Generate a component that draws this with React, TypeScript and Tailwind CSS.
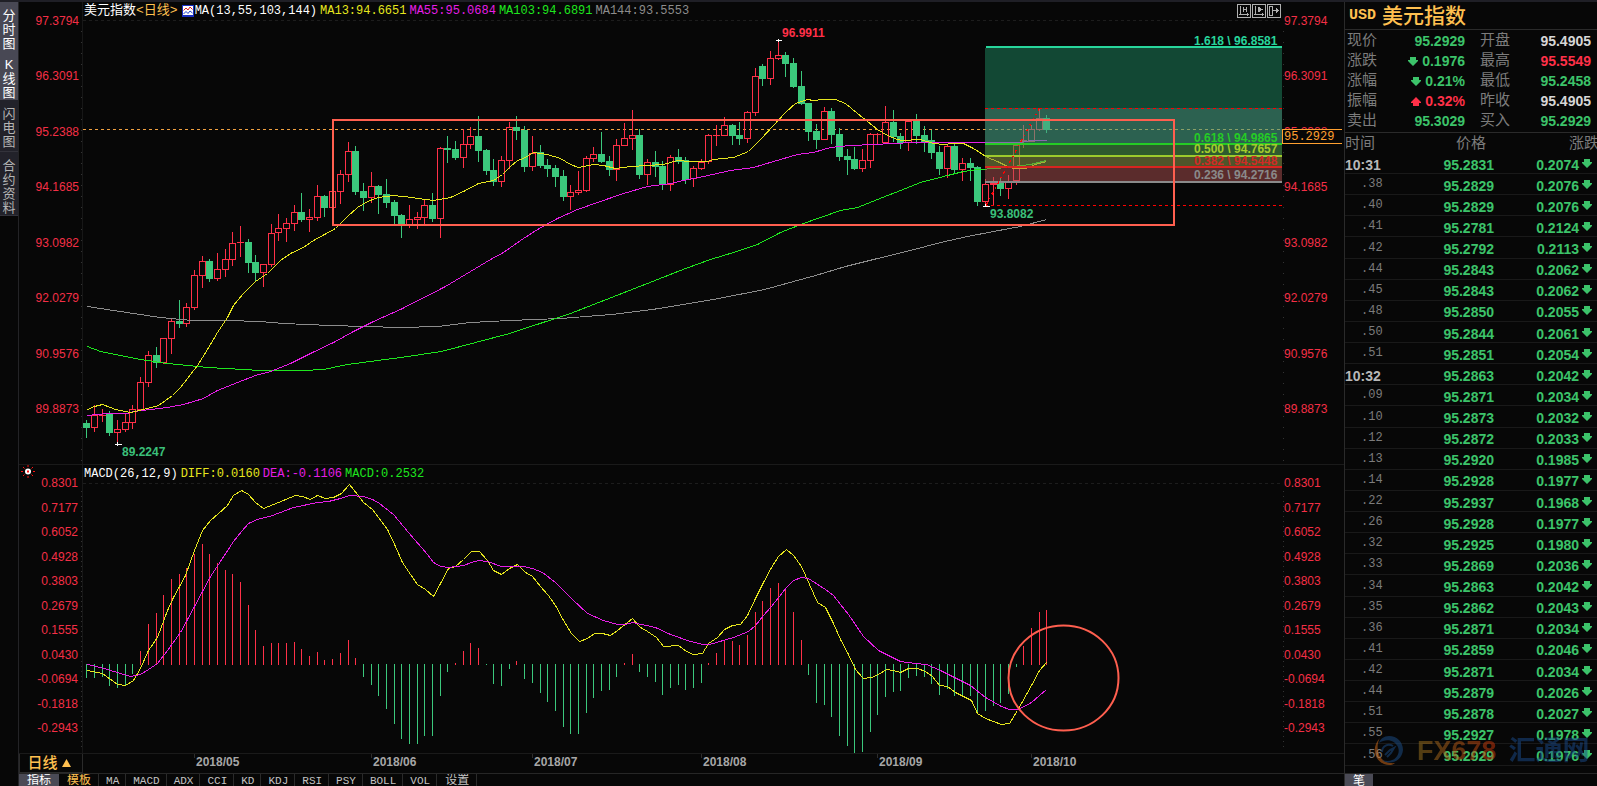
import React from "react";

type Candle = [kind: "R" | "G", high: number, top: number, bottom: number, low: number];
type Point = [number, number];

const X0 = 86.4;
const STEP = 7.68;
const xAt = (i: number) => Math.round(X0 + STEP * i);

const PLOT_LEFT = 83;
const PLOT_WIDTH = 1199;
const PRICE_TOP = 2;
const PRICE_HEIGHT = 462;
const MACD_TOP = 465;
const MACD_HEIGHT = 288;
const ZERO = 664;

const RED = "#ff3048";
const GREEN = "#3bc87c";

const candles: Candle[] = [
  ["G", 420, 423, 428, 437], ["R", 405, 415, 428, 432], ["R", 409, 415, 416, 421], ["G", 411, 414, 433, 435],
  ["R", 420, 429, 433, 442], ["R", 414, 422, 430, 432], ["R", 405, 409, 423, 429], ["R", 377, 382, 410, 410],
  ["R", 351, 355, 383, 387], ["G", 347, 355, 363, 367], ["R", 338, 338, 363, 364], ["R", 319, 321, 339, 354],
  ["G", 300, 321, 324, 327], ["R", 303, 307, 324, 327], ["R", 270, 275, 308, 310], ["R", 256, 261, 276, 288],
  ["G", 259, 261, 279, 281], ["R", 253, 269, 279, 281], ["R", 249, 259, 270, 277], ["R", 232, 243, 260, 266],
  ["R", 226, 242, 243, 256], ["G", 239, 242, 263, 272], ["G", 255, 262, 273, 281], ["R", 264, 264, 273, 287],
  ["R", 224, 233, 265, 267], ["R", 214, 228, 233, 241], ["R", 218, 223, 229, 242], ["R", 205, 212, 224, 231],
  ["G", 193, 212, 220, 221], ["R", 209, 217, 220, 232], ["R", 185, 196, 218, 221], ["G", 195, 196, 208, 216],
  ["R", 191, 191, 208, 208], ["R", 170, 174, 192, 204], ["R", 142, 151, 175, 182], ["G", 146, 151, 192, 194],
  ["G", 183, 191, 198, 210], ["R", 172, 186, 198, 203], ["G", 185, 186, 195, 213], ["G", 179, 194, 203, 207],
  ["G", 200, 202, 216, 224], ["G", 214, 215, 225, 237], ["R", 205, 219, 225, 228], ["R", 212, 217, 220, 229],
  ["R", 200, 205, 218, 224], ["G", 193, 205, 219, 221], ["R", 147, 148, 219, 238], ["G", 136, 148, 150, 162],
  ["G", 141, 149, 158, 159], ["R", 129, 144, 158, 168], ["R", 127, 136, 145, 149], ["G", 116, 136, 151, 161],
  ["G", 149, 150, 171, 174], ["G", 159, 170, 182, 185], ["R", 156, 160, 182, 187], ["R", 122, 127, 161, 169],
  ["G", 116, 127, 131, 139], ["G", 126, 130, 167, 171], ["R", 136, 153, 167, 171], ["G", 145, 152, 166, 167],
  ["G", 159, 165, 169, 176], ["G", 165, 168, 177, 186], ["G", 170, 176, 197, 200], ["R", 185, 192, 197, 210],
  ["R", 171, 190, 193, 195], ["R", 156, 158, 191, 192], ["R", 147, 154, 159, 162], ["G", 132, 154, 162, 162],
  ["G", 156, 161, 170, 175], ["R", 139, 145, 170, 181], ["R", 123, 138, 146, 146], ["R", 110, 135, 139, 150],
  ["G", 129, 135, 175, 178], ["R", 159, 162, 175, 185], ["G", 151, 162, 167, 176], ["G", 161, 166, 185, 189],
  ["R", 155, 157, 185, 191], ["G", 149, 157, 162, 163], ["G", 157, 160, 180, 183], ["R", 166, 168, 179, 187],
  ["R", 159, 162, 169, 170], ["R", 134, 135, 162, 164], ["R", 125, 135, 136, 145], ["R", 117, 125, 136, 136],
  ["G", 124, 125, 136, 144], ["G", 122, 135, 139, 144], ["R", 111, 112, 139, 143], ["R", 68, 76, 113, 116],
  ["G", 64, 66, 79, 85], ["R", 51, 58, 79, 85], ["R", 41, 55, 59, 60], ["G", 52, 55, 64, 76],
  ["G", 58, 63, 87, 87], ["G", 71, 86, 104, 104], ["G", 103, 103, 132, 140], ["G", 124, 131, 140, 148],
  ["R", 107, 111, 140, 140], ["G", 108, 111, 135, 143], ["G", 128, 134, 157, 160], ["G", 149, 156, 160, 174],
  ["G", 147, 159, 169, 169], ["R", 149, 160, 169, 172], ["R", 133, 134, 161, 168], ["R", 133, 134, 135, 143],
  ["R", 106, 122, 143, 143], ["G", 110, 122, 137, 141], ["G", 133, 136, 143, 148], ["R", 121, 121, 143, 151],
  ["G", 114, 120, 136, 143], ["G", 126, 135, 142, 151], ["G", 130, 140, 153, 158], ["G", 146, 152, 169, 174],
  ["R", 144, 146, 169, 178], ["G", 144, 146, 170, 172], ["R", 158, 163, 170, 181], ["G", 158, 163, 168, 180],
  ["G", 166, 167, 202, 205], ["R", 179, 184, 202, 205], ["R", 177, 183, 185, 205], ["G", 177, 183, 189, 195],
  ["R", 175, 182, 189, 199], ["R", 145, 145, 181, 185], ["R", 125, 140, 142, 148], ["R", 125, 129, 142, 142],
  ["R", 106, 118, 130, 131], ["G", 115, 118, 130, 132],
];

const ma13: Point[] = [
  [87, 409], [94, 406], [102, 404], [115, 409], [130, 412], [143, 409], [158, 405], [172, 395], [180, 387], [187, 378],
  [197, 365], [207, 349], [217, 332], [227, 317], [233, 305], [243, 293], [255, 281], [267, 273], [280, 260], [290, 253],
  [303, 247], [313, 240], [335, 228], [347, 216], [357, 207], [367, 201], [378, 197], [393, 195], [412, 197], [417, 198],
  [433, 200], [450, 197], [463, 191], [478, 183], [493, 180], [502, 174], [510, 166], [517, 160], [523, 158], [533, 152],
  [547, 154], [560, 158], [570, 164], [578, 167], [593, 164], [603, 165], [615, 168], [630, 166], [663, 164], [677, 160],
  [690, 161], [707, 161], [713, 159], [733, 157], [748, 151], [760, 139], [773, 125], [785, 112], [795, 103], [807, 99],
  [813, 100], [822, 99], [835, 99], [845, 103], [857, 113], [867, 121], [877, 129], [887, 135], [897, 139], [902, 140],
  [920, 139], [933, 143], [943, 144], [953, 143], [963, 143], [973, 148], [987, 157], [997, 161], [1007, 166], [1013, 168],
  [1025, 168], [1035, 164], [1046, 161],
];
const ma55: Point[] = [
  [87, 415], [107, 413], [127, 413], [133, 411], [150, 409], [167, 407], [183, 404], [203, 398], [217, 390], [237, 382],
  [255, 375], [270, 371], [290, 363], [310, 353], [333, 342], [353, 331], [373, 321], [400, 309], [445, 286], [490, 259],
  [503, 252], [520, 240], [537, 229], [557, 218], [577, 209], [597, 202], [623, 193], [647, 186], [670, 183], [683, 180],
  [703, 176], [730, 170], [753, 167], [773, 161], [797, 154], [813, 152], [830, 147], [850, 145], [873, 144], [913, 142],
  [967, 142], [1020, 142], [1030, 140], [1046, 140],
];
const ma103: Point[] = [
  [87, 346], [100, 351], [120, 355], [140, 359], [167, 363], [187, 365], [207, 367], [243, 369], [260, 370], [303, 370],
  [323, 369], [347, 364], [377, 360], [400, 357], [441, 351], [475, 342], [509, 333], [570, 313], [611, 297], [652, 281],
  [685, 268], [710, 259], [733, 252], [757, 244], [780, 232], [803, 223], [820, 217], [840, 210], [857, 207], [877, 199],
  [900, 190], [920, 182], [943, 176], [963, 171], [977, 169], [997, 168], [1012, 166], [1030, 164], [1046, 160],
];
const ma144: Point[] = [
  [87, 306], [113, 310], [133, 313], [160, 317], [180, 319], [193, 320], [227, 320], [260, 321], [283, 323], [330, 325],
  [400, 327], [438, 326], [470, 322], [509, 320], [560, 318], [611, 314], [652, 309], [713, 299], [764, 289], [815, 275],
  [845, 266], [873, 259], [910, 250], [940, 242], [967, 236], [993, 231], [1020, 226], [1046, 219],
];

const macdEnds: number[] = [
  678, 678, 677, 686, 688, 685, 674, 651, 624, 613, 595, 579, 574, 568, 554, 544, 554, 563, 570, 574, 582, 605, 630, 646,
  643, 643, 643, 642, 649, 656, 652, 660, 659, 653, 640, 658, 677, 685, 696, 709, 724, 739, 744, 744, 736, 736, 696, 672,
  663, 651, 643, 648, 665, 684, 686, 669, 661, 679, 683, 693, 702, 711, 727, 734, 734, 713, 698, 691, 690, 677, 663, 654,
  672, 677, 682, 695, 688, 685, 690, 688, 683, 663, 653, 641, 641, 645, 635, 612, 601, 588, 583, 590, 612, 640, 675, 703,
  705, 717, 736, 746, 753, 752, 732, 715, 697, 692, 691, 678, 676, 677, 684, 695, 689, 696, 697, 696, 712, 711, 706, 703,
  694, 667, 646, 628, 612, 610,
];
const diff: Point[] = [
  [87, 670], [102, 673], [117, 684], [125, 685], [133, 680], [140, 668], [148, 650], [157, 637], [167, 610], [173, 597],
  [185, 575], [194, 550], [202, 530], [210, 520], [218, 513], [227, 505], [233, 495], [241, 490], [248, 494], [255, 502],
  [263, 508], [278, 502], [295, 495], [302, 496], [310, 499], [317, 495], [325, 498], [333, 497], [341, 493], [349, 484],
  [357, 494], [363, 502], [372, 509], [387, 529], [395, 546], [402, 562], [410, 574], [417, 584], [425, 589], [433, 596],
  [440, 583], [448, 568], [455, 566], [463, 559], [471, 551], [479, 551], [487, 560], [493, 570], [501, 574], [509, 568],
  [517, 564], [525, 572], [532, 576], [540, 586], [548, 595], [555, 605], [563, 620], [571, 633], [579, 641], [587, 638],
  [594, 633], [602, 633], [610, 635], [617, 630], [632, 618], [640, 627], [647, 631], [656, 637], [663, 646], [678, 645],
  [686, 651], [693, 654], [702, 653], [708, 643], [717, 637], [724, 629], [732, 625], [740, 624], [747, 615], [755, 598],
  [763, 582], [771, 567], [778, 556], [786, 549], [793, 555], [801, 566], [809, 584], [817, 602], [825, 607], [833, 623],
  [840, 639], [848, 654], [855, 669], [863, 678], [871, 677], [878, 674], [886, 669], [893, 670], [900, 672], [908, 668],
  [917, 668], [925, 671], [932, 676], [939, 685], [947, 686], [955, 692], [971, 700], [977, 713], [985, 718], [1001, 724],
  [1009, 723], [1017, 710], [1031, 685], [1039, 670], [1046, 662],
];
const dea: Point[] = [
  [87, 664], [100, 667], [117, 672], [130, 676], [140, 674], [148, 669], [157, 663], [167, 650], [180, 632], [194, 606],
  [202, 591], [210, 576], [218, 564], [233, 541], [241, 531], [248, 523], [257, 519], [272, 515], [293, 507], [317, 502],
  [328, 501], [340, 498], [349, 495], [363, 496], [372, 499], [379, 503], [393, 514], [408, 532], [427, 554], [433, 562],
  [440, 566], [448, 567], [463, 565], [471, 562], [478, 560], [487, 561], [501, 566], [523, 566], [532, 568], [542, 572],
  [555, 582], [571, 598], [587, 613], [603, 620], [617, 624], [625, 624], [632, 622], [655, 627], [670, 634], [687, 640],
  [702, 644], [709, 644], [733, 637], [748, 631], [755, 625], [763, 615], [771, 606], [786, 587], [793, 580], [801, 577],
  [808, 578], [825, 589], [833, 595], [840, 604], [848, 614], [863, 636], [878, 650], [900, 661], [915, 663], [926, 664],
  [940, 670], [970, 685], [985, 697], [1001, 706], [1009, 709], [1018, 709], [1031, 702], [1046, 689],
];

const priceScale = ["97.3794", "96.3091", "95.2388", "94.1685", "93.0982", "92.0279", "90.9576", "89.8873"];
const macdScale = ["0.8301", "0.7177", "0.6052", "0.4928", "0.3803", "0.2679", "0.1555", "0.0430", "-0.0694", "-0.1818", "-0.2943"];
const months: [string, number][] = [
  ["2018/05", 194], ["2018/06", 371], ["2018/07", 532], ["2018/08", 701], ["2018/09", 877], ["2018/10", 1031],
];

const ticks: [string, string, string][] = [
  ["10:31", "95.2831", "0.2074"], [".38", "95.2829", "0.2076"], [".40", "95.2829", "0.2076"], [".41", "95.2781", "0.2124"],
  [".42", "95.2792", "0.2113"], [".44", "95.2843", "0.2062"], [".45", "95.2843", "0.2062"], [".48", "95.2850", "0.2055"],
  [".50", "95.2844", "0.2061"], [".51", "95.2851", "0.2054"], ["10:32", "95.2863", "0.2042"], [".09", "95.2871", "0.2034"],
  [".10", "95.2873", "0.2032"], [".12", "95.2872", "0.2033"], [".13", "95.2920", "0.1985"], [".14", "95.2928", "0.1977"],
  [".22", "95.2937", "0.1968"], [".26", "95.2928", "0.1977"], [".32", "95.2925", "0.1980"], [".33", "95.2869", "0.2036"],
  [".34", "95.2863", "0.2042"], [".35", "95.2862", "0.2043"], [".36", "95.2871", "0.2034"], [".41", "95.2859", "0.2046"],
  [".42", "95.2871", "0.2034"], [".44", "95.2879", "0.2026"], [".51", "95.2878", "0.2027"], [".55", "95.2927", "0.1978"],
  [".56", "95.2929", "0.1976"],
];

const CJK = "font-['Liberation_Sans','Noto_Sans_CJK_SC',sans-serif]";
const MONO = "font-['Liberation_Mono','Noto_Sans_CJK_SC',monospace]";

const toPoints = (pts: Point[]) => pts.map(([x, y]) => `${x + 0.5},${y + 0.5}`).join(" ");

function Line({ pts, color }: { pts: Point[]; color: string }) {
  return <polyline points={toPoints(pts)} fill="none" stroke={color} strokeWidth="1" />;
}

function CandleMark({ i, c }: { i: number; c: Candle }) {
  const x = xAt(i);
  const [kind, high, top, bottom, low] = c;
  if (kind === "G") {
    return (
      <g fill={GREEN}>
        <rect x={x} y={high} width="1" height={low - high + 1} />
        <rect x={x - 3} y={top} width="7" height={Math.max(bottom - top, 1)} />
      </g>
    );
  }
  if (bottom - top <= 1) {
    return (
      <g fill={RED}>
        <rect x={x} y={high} width="1" height={low - high + 1} />
        <rect x={x - 3} y={top} width="7" height="1" />
      </g>
    );
  }
  return (
    <g>
      <rect x={x} y={high} width="1" height={top - high} fill={RED} />
      <rect x={x} y={bottom} width="1" height={Math.max(low - bottom, 0)} fill={RED} />
      <rect x={x - 2.5} y={top + 0.5} width="6" height={bottom - top - 1} fill="none" stroke={RED} />
    </g>
  );
}

function AxisTicks({ x, from, to, step }: { x: number; from: number; to: number; step: number }) {
  return <line x1={x} x2={x} y1={from} y2={to} stroke="#333" strokeWidth="1" strokeDasharray={`1 ${step - 1}`} />;
}

function Note({ x, y, className, children }: { x: number; y: number; className: string; children: string }) {
  return (
    <span
      className={`absolute -translate-y-1/2 text-[12px] leading-4 font-bold whitespace-pre ${className}`}
      style={{
        left: `${((x - PLOT_LEFT) / PLOT_WIDTH) * 100}%`,
        top: `${((y - PRICE_TOP) / PRICE_HEIGHT) * 100}%`,
      }}
    >
      {children}
    </span>
  );
}

const fibLabels: [string, number, string][] = [
  ["1.618 \\ 96.8581", 41, "text-[#27d59b]"],
  ["0.618 \\ 94.9865", 138, "text-[#25cc25]"],
  ["0.500 \\ 94.7657", 149, "text-[#a3cd2c]"],
  ["0.382 \\ 94.5448", 161, "text-[#d02b26]"],
  ["0.236 \\ 94.2716", 175, "text-[#8a8a8a]"],
];

function PriceChart() {
  return (
    <svg
      className="absolute inset-0 h-full w-full"
      viewBox={`${PLOT_LEFT} ${PRICE_TOP} ${PLOT_WIDTH} ${PRICE_HEIGHT}`}
      preserveAspectRatio="none"
      shapeRendering="crispEdges"
      aria-hidden="true"
    >
      <line x1="83" x2="1282" y1="20.5" y2="20.5" stroke="#1d1d1d" strokeDasharray="3 3" />
      <line x1="83" x2="1282" y1="129.5" y2="129.5" stroke="#f0a040" strokeDasharray="3 3" />
      {candles.map((c, i) => (
        <CandleMark key={i} i={i} c={c} />
      ))}
      <Line pts={ma144} color="#8c8c8c" />
      <Line pts={ma103} color="#1ee61e" />
      <Line pts={ma55} color="#e61ee6" />
      <Line pts={ma13} color="#e6e61e" />
      <g>
        <rect x="985" y="48" width="297" height="60" fill="#124834" />
        <rect x="985" y="108" width="297" height="35" fill="#469e82" fillOpacity="0.6" />
        <rect x="985" y="145" width="297" height="10" fill="#49924a" fillOpacity="0.6" />
        <rect x="985" y="157" width="297" height="9" fill="#808a42" fillOpacity="0.6" />
        <rect x="985" y="168" width="297" height="13" fill="#b05252" fillOpacity="0.5" />
        <rect x="986" y="46" width="296" height="2" fill="#27d59b" />
        <rect x="985" y="143" width="297" height="2" fill="#25cc25" />
        <rect x="985" y="155" width="297" height="2" fill="#9dcb2c" />
        <rect x="985" y="166" width="297" height="2" fill="#d8241f" />
        <rect x="985" y="181" width="297" height="2" fill="#8a8a8a" />
        <line x1="985" x2="1282" y1="108.5" y2="108.5" stroke="#ff0000" strokeDasharray="3 3" />
        <line x1="985" x2="1282" y1="205.5" y2="205.5" stroke="#ff0000" strokeDasharray="3 3" />
        <line x1="986" x2="1040" y1="205" y2="107" stroke="#ff0000" strokeWidth="1.5" strokeDasharray="3 4 1 4" />
      </g>
      <g fill="#ffffff">
        <rect x="776" y="40" width="6" height="1" />
        <rect x="778" y="39" width="1" height="3" />
        <rect x="115" y="444" width="7" height="1" />
        <rect x="117" y="442" width="1" height="4" />
        <rect x="983" y="206" width="7" height="1" />
        <rect x="985" y="204" width="1" height="2" />
      </g>
      <rect x="333" y="120" width="841" height="105" fill="none" stroke="#ff5f4f" strokeWidth="2" />
    </svg>
  );
}

function MacdChart() {
  return (
    <svg
      className="absolute inset-0 h-full w-full"
      viewBox={`${PLOT_LEFT} ${MACD_TOP} ${PLOT_WIDTH} ${MACD_HEIGHT}`}
      preserveAspectRatio="none"
      shapeRendering="crispEdges"
      aria-hidden="true"
    >
      <line x1="83" x2="1282" y1="483.5" y2="483.5" stroke="#1d1d1d" strokeDasharray="3 3" />
      {macdEnds.map((end, i) =>
        end > ZERO ? (
          <rect key={i} x={xAt(i)} y={ZERO} width="1" height={end - ZERO} fill={GREEN} />
        ) : (
          <rect key={i} x={xAt(i)} y={end} width="1" height={ZERO - end + 1} fill={RED} />
        ),
      )}
      <Line pts={diff} color="#e6e61e" />
      <Line pts={dea} color="#e61ee6" />
      <ellipse
        cx="1063.5" cy="678" rx="55" ry="52.5" fill="none" stroke="#ff5f4f" strokeWidth="2" shapeRendering="auto"
      />
    </svg>
  );
}

function Scale({ labels, className }: { labels: string[]; className: string }) {
  return (
    <div className={`flex flex-col justify-between text-[12px] leading-4 text-[#f42f46] ${className}`}>
      {labels.map((l) => (
        <span key={l}>{l}</span>
      ))}
    </div>
  );
}

function Gutter({ side, from, to, viewBox, step }: { side: "left" | "right"; from: number; to: number; viewBox: string; step: number }) {
  return (
    <svg
      className={side === "left" ? "absolute top-0 right-0 h-full w-[2px]" : "absolute top-0 left-0 h-full w-[2px]"}
      viewBox={viewBox}
      preserveAspectRatio="none"
      shapeRendering="crispEdges"
      aria-hidden="true"
    >
      {side === "left" && <line x1="1.5" x2="1.5" y1={from - 60} y2={to + 60} stroke="#171717" />}
      <AxisTicks x={side === "left" ? 0.5 : 1.5} from={from} to={to} step={step} />
    </svg>
  );
}

function Arrow({ up = false }: { up?: boolean }) {
  return (
    <svg className="inline-block h-[9px] w-[10px] shrink-0" viewBox="0 0 10 9" fill="currentColor" aria-hidden="true">
      {up ? <path d="M5 0 10 5V6H8V9H2V6H0V5Z" /> : <path d="M2 0H8V3H10V4L5 9 0 4V3H2Z" />}
    </svg>
  );
}

function SideTab({ text, active, className }: { text: string; active?: boolean; className?: string }) {
  return (
    <button
      type="button"
      className={`flex w-full flex-col items-center pt-[7px] text-[13px] leading-[14px] ${
        active ? "bg-[#484854] text-white" : "border-b border-[#33333b] bg-[#22222a] text-[#b4b4b4]"
      } ${className ?? ""}`}
    >
      {[...text].map((ch, i) => (
        <span key={i}>{ch}</span>
      ))}
    </button>
  );
}

function ToolButton({ label, children }: { label: string; children: React.ReactNode }) {
  return (
    <button type="button" aria-label={label} className="h-[14px] w-[14px] border border-[#b0b0b0] text-[#b0b0b0]">
      <svg className="h-3 w-3" viewBox="0 0 12 12" fill="none" stroke="currentColor" shapeRendering="crispEdges" aria-hidden="true">
        {children}
      </svg>
    </button>
  );
}

function ChartArea() {
  return (
    <main className="flex min-w-0 flex-1 flex-col border-l border-[#232326]">
      <section className="flex min-h-0 flex-[462_1_0%]">
        <div className="relative flex w-16 shrink-0 justify-end">
          <Scale labels={priceScale} className="pt-[11px] pr-1 pb-[47px] text-right" />
          <Gutter side="left" from={31} to={462} viewBox="0 2 2 462" step={11} />
        </div>
        <div className="relative min-w-0 flex-1">
          <PriceChart />
          <Note x={782} y={33} className="text-[#ff3048]">96.9911</Note>
          <Note x={122} y={452} className="text-[#3bc07a]">89.2247</Note>
          <Note x={990} y={214} className="text-[#3bc07a]">93.8082</Note>
          {fibLabels.map(([t, y, cls]) => (
            <Note key={t} x={1194} y={y} className={cls}>{t}</Note>
          ))}
          <div className={`relative flex h-[18px] items-center gap-[3px] pl-px text-[12px] leading-4 whitespace-nowrap ${MONO}`}>
            <h1 className="mr-1 flex text-[13px] font-normal text-white">
              美元指数<span className="text-[#ffc050]">&lt;日线&gt;</span>
            </h1>
            <svg className="-mr-[2px] -ml-[3px] h-3 w-3" viewBox="0 0 12 12" aria-hidden="true">
              <rect width="12" height="12" fill="#1a2fc0" />
              <rect x="1" y="1" width="10" height="9" fill="#ffffff" />
              <path d="M1.5 5.5 4 3 6 5 8 2 10.5 4.5" fill="none" stroke="#e02020" />
              <path d="M1.5 9 4 6.5 6 8.5 8 6 10.5 8" fill="none" stroke="#2040d0" />
            </svg>
            <span className="text-white">MA(13,55,103,144)</span>
            <span className="text-[#e6e61e]">MA13:94.6651</span>
            <span className="text-[#e61ee6]">MA55:95.0684</span>
            <span className="text-[#1ee61e]">MA103:94.6891</span>
            <span className="text-[#8c8c8c]">MA144:93.5553</span>
            <div className="mr-px ml-auto flex gap-px">
              <ToolButton label="压缩">
                <path d="M2.5 1V10M1 9.5H11M9.5 8V11M5.5 2V7M8.5 2V7M6 4.5H8" />
              </ToolButton>
              <ToolButton label="播放">
                <path d="M2.5 1V10M1 9.5H11M9.5 8V11" />
                <path d="M5 1.5V7.5L9.5 4.5Z" fill="currentColor" stroke="none" />
              </ToolButton>
              <ToolButton label="平移">
                <path d="M1.5 1.5H4.5V10.5H1.5ZM5 5.5H11M8.5 3V8M9.5 4V7" />
              </ToolButton>
            </div>
          </div>
        </div>
        <div className="relative w-[62px] shrink-0">
          <Scale labels={priceScale} className="h-full pt-[11px] pb-[47px] pl-[2px]" />
          <Gutter side="right" from={31} to={462} viewBox="0 2 2 462" step={11} />
          <div
            className={`absolute right-[2px] left-0 h-[15px] border border-r-0 border-[#ffa030] bg-[#070707] pt-px pl-px text-[12px] leading-[13px] text-[#ffa030] ${MONO}`}
            style={{ top: `${((129 - PRICE_TOP) / PRICE_HEIGHT) * 100}%` }}
          >
            95.2929
          </div>
        </div>
      </section>

      <section className="flex min-h-0 flex-[288_1_0%] border-t border-[#1a1a1a]">
        <div className="relative flex w-16 shrink-0 justify-between">
          <svg className="h-[14px] w-[18px]" viewBox="0 0 18 14" aria-hidden="true">
            <path
              d="M9 0V2M9 11V13M2 6.5H4M14 6.5H16M4 2 5.5 3.5M14 2 12.5 3.5M4 11 5.5 9.5M14 11 12.5 9.5"
              stroke="#ff1010"
            />
            <circle cx="9" cy="6.5" r="3" fill="#ffffff" />
            <rect x="8" y="5.5" width="2" height="2" fill="#ff1010" />
          </svg>
          <Scale labels={macdScale} className="pt-[10px] pr-[5px] pb-[17px] text-right" />
          <Gutter side="left" from={491} to={750} viewBox="0 465 2 288" step={5} />
        </div>
        <div className="relative min-w-0 flex-1">
          <MacdChart />
          <div className={`relative flex h-[17px] items-center gap-[3px] pl-px text-[12px] leading-4 whitespace-nowrap ${MONO}`}>
            <span className="text-white">MACD(26,12,9)</span>
            <span className="text-[#e6e61e]">DIFF:0.0160</span>
            <span className="text-[#e61ee6]">DEA:-0.1106</span>
            <span className="text-[#1ee61e]">MACD:0.2532</span>
          </div>
        </div>
        <div className="relative w-[62px] shrink-0">
          <Scale labels={macdScale} className="h-full pt-[10px] pb-[17px] pl-[2px]" />
          <Gutter side="right" from={491} to={750} viewBox="0 465 2 288" step={5} />
        </div>
      </section>

      <div className="flex h-5 shrink-0 border-t border-[#1a1a1a]">
        <button
          type="button"
          className="flex w-16 shrink-0 items-center justify-center gap-1 border border-t-0 border-[#2a2a2a] pr-1 text-[15px] leading-4 font-medium text-[#ffc050]"
        >
          日线
          <svg className="h-2 w-[9px]" viewBox="0 0 9 8" fill="currentColor" aria-hidden="true">
            <path d="M4.5 0 9 8H0Z" />
          </svg>
        </button>
        <div className="relative flex-1">
          {months.map(([m, x]) => (
            <span
              key={m}
              className="absolute top-0 h-4 text-[12px] leading-4 font-bold text-[#a6a6a6]"
              style={{ left: `${((x - PLOT_LEFT) / PLOT_WIDTH) * 100}%` }}
            >
              <span className="flex gap-[1px]">
                <i className="block h-1 w-px bg-[#2c2c2c]" />
                {m}
              </span>
            </span>
          ))}
        </div>
        <div className="w-[62px] shrink-0" />
      </div>

      <nav className={`flex h-[13px] shrink-0 items-start overflow-hidden border-t border-[#262626] text-[11px] leading-[15px] text-[#c4c4c4] ${MONO}`}>
        <button type="button" className="bg-[#4a4a55] px-2 text-[12px] text-white">指标</button>
        <button type="button" className="border-r border-[#2a2a2a] pr-[7px] pl-2 text-[12px] text-[#ffc050]">模板</button>
        {["MA", "MACD", "ADX", "CCI", "KD", "KDJ", "RSI", "PSY", "BOLL", "VOL"].map((t) => (
          <button key={t} type="button" className="border-r border-[#2a2a2a] pr-[6px] pl-[7px]">{t}</button>
        ))}
        <button type="button" className="border-r border-[#2a2a2a] pr-[7px] pl-2 text-[12px]">设置</button>
      </nav>
    </main>
  );
}

const UP = "text-[#ff3048]";
const DOWN = "text-[#3cc36a]";
const FLAT = "text-[#d6d6d6]";

const quotes: { label: string; value: string; tone: string; arrow?: "up" | "down" }[] = [
  { label: "现价", value: "95.2929", tone: DOWN },
  { label: "开盘", value: "95.4905", tone: FLAT },
  { label: "涨跌", value: "0.1976", tone: DOWN, arrow: "down" },
  { label: "最高", value: "95.5549", tone: UP },
  { label: "涨幅", value: "0.21%", tone: DOWN, arrow: "down" },
  { label: "最低", value: "95.2458", tone: DOWN },
  { label: "振幅", value: "0.32%", tone: UP, arrow: "up" },
  { label: "昨收", value: "95.4905", tone: FLAT },
  { label: "卖出", value: "95.3029", tone: DOWN },
  { label: "买入", value: "95.2929", tone: DOWN },
];

function QuotePanel() {
  return (
    <aside className="relative flex w-[253px] shrink-0 flex-col overflow-hidden border-l border-[#2a2a2a]">
      <h2 className="flex h-7 shrink-0 items-center gap-[6px] border-b border-[#2a2a2a] pl-1 text-[21px] leading-6 font-medium text-[#ffc050]">
        <span className={`text-[15px] font-bold ${MONO}`}>USD</span>
        美元指数
      </h2>
      <dl className="grid h-[103px] shrink-0 auto-rows-[20px] grid-cols-[118px_1fr] gap-x-[15px] border-b border-[#2a2a2a] pr-[6px] pl-[2px]">
        {quotes.map((q) => (
          <div key={q.label} className="flex items-center justify-between leading-5">
            <dt className="text-[15px] text-[#7c7c7c]">{q.label}</dt>
            <dd className={`flex items-center gap-1 pt-[2px] text-[14px] font-bold ${q.tone}`}>
              {q.arrow && <Arrow up={q.arrow === "up"} />}
              {q.value}
            </dd>
          </div>
        ))}
      </dl>
      <div className="min-h-0 flex-1 pb-[7px]">
        <table className="h-full w-full table-fixed border-collapse text-[14px] leading-4 whitespace-nowrap">
          <thead>
            <tr className="text-left text-[15px] text-[#7c7c7c]">
              <th className="h-5 w-20 p-0 font-normal">时间</th>
              <th className="w-[70px] p-0 pr-[9px] text-right font-normal">价格</th>
              <th className="p-0 pl-[74px] font-normal">涨跌</th>
            </tr>
          </thead>
          <tbody>
            {ticks.map(([time, price, change], i) => (
              <tr key={i} className="border-b border-[#191919]">
                {time.startsWith(".") ? (
                  <td className={`p-0 pl-4 text-[12px] leading-3 text-[#7c7c7c] ${MONO}`}>{time}</td>
                ) : (
                  <td className="p-0 pt-[3px] font-bold text-[#b8b8b8]">{time}</td>
                )}
                <td className="p-0 pt-[3px] pr-px text-right font-bold text-[#3cc36a]">{price}</td>
                <td className="p-0 pr-[5px] font-bold text-[#3cc36a]">
                  <span className="flex items-center justify-end gap-[3px]">
                    <span className="pt-[3px]">{change}</span>
                    <Arrow />
                  </span>
                </td>
              </tr>
            ))}
          </tbody>
        </table>
      </div>
      <nav className="flex h-[13px] shrink-0 overflow-hidden border-t border-[#262626]">
        <button type="button" className="h-[15px] bg-[#4a4a55] px-2 text-[12px] leading-[15px] text-white">笔</button>
      </nav>
      <div className="pointer-events-none absolute bottom-[19px] left-7 flex items-center gap-3 text-[27px] leading-8 font-bold opacity-50">
        <svg className="h-8 w-8" viewBox="0 0 32 32" fill="none" aria-hidden="true">
          <path d="M7 3C-1 11 0 24 11 29c5 2 9 1 11-1-9 1-16-4-17-12C4 11 5 6 7 3Z" fill="#d8701c" />
          <path d="M9 25c8 6 20 1 21-10C30 7 24 1 16 1 11 1 7 4 6 8c7-5 16-3 19 4 3 8-4 17-16 13Z" fill="#1c4f8a" />
          <path d="M9 17c0-6 6-9 11-6M12 20l5-5 4-2-3 5-4 4" stroke="#1c4f8a" strokeWidth="2" />
        </svg>
        <span className="bg-gradient-to-r from-[#9a7620] to-[#d03008] bg-clip-text text-transparent">FX678</span>
        <span className="text-[#1a4c8c]">汇通网</span>
      </div>
    </aside>
  );
}

export default function App() {
  return (
    <div className={`flex h-screen flex-col overflow-hidden bg-[#070707] ${CJK}`}>
      <div className="h-[2px] shrink-0 bg-[#1f1f26]" />
      <div className="flex min-h-0 flex-1">
        <nav className="flex w-[18px] shrink-0 flex-col">
          <SideTab text="分时图" active />
          <SideTab text="K线图" active />
          <SideTab text="闪电图" className="pb-[2px]" />
          <SideTab text="合约资料" />
        </nav>
        <ChartArea />
        <QuotePanel />
      </div>
    </div>
  );
}
